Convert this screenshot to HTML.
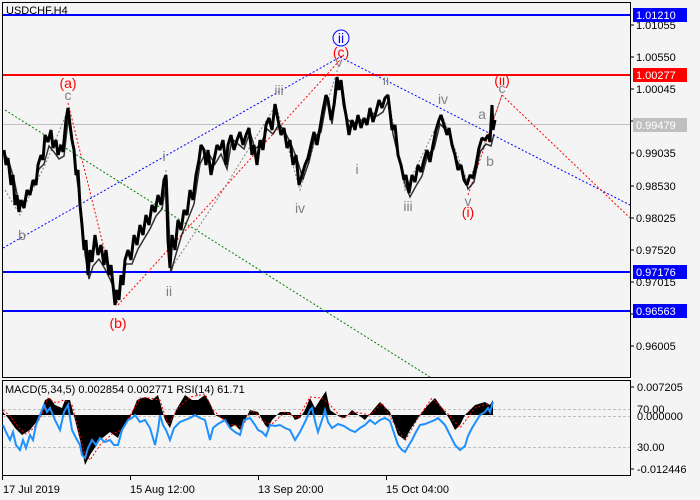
<!DOCTYPE html>
<html><head><style>
html,body{margin:0;padding:0;background:#f4f4f4;}
svg{display:block;font-family:"Liberation Sans","DejaVu Sans",sans-serif;}
</style></head><body>
<svg width="700" height="500" viewBox="0 0 700 500" xmlns="http://www.w3.org/2000/svg">
<rect width="700" height="500" fill="#f4f4f4"/>
<rect x="2.5" y="2.5" width="628" height="375" fill="#f4f4f4" stroke="#000" stroke-width="1"/>
<rect x="2.5" y="380.5" width="628" height="95" fill="#f4f4f4" stroke="#000" stroke-width="1"/>
<text x="6" y="14" font-size="11" fill="#000">USDCHF,H4</text>

<line x1="3" y1="124.5" x2="630" y2="124.5" stroke="#c0c0c0" stroke-width="1"/>
<line x1="3" y1="15" x2="630" y2="15" stroke="#0000ff" stroke-width="2"/>
<line x1="3" y1="75" x2="630" y2="75" stroke="#ff0000" stroke-width="2"/>
<line x1="3" y1="272" x2="630" y2="272" stroke="#0000ff" stroke-width="2"/>
<line x1="3" y1="311" x2="630" y2="311" stroke="#0000ff" stroke-width="2"/>

<g fill="none" stroke-dasharray="2,2" stroke-width="1">
<line x1="3" y1="248" x2="340" y2="57" stroke="#0000ff"/>
<line x1="340" y1="57" x2="630" y2="205" stroke="#0000ff"/>
<line x1="5" y1="110" x2="430" y2="377" stroke="#008000"/>
<line x1="68" y1="103" x2="118" y2="305" stroke="#ff0000"/>
<line x1="118" y1="305" x2="340" y2="60" stroke="#ff0000"/>
<line x1="468" y1="195" x2="502" y2="95" stroke="#ff0000"/>
<line x1="502" y1="95" x2="630" y2="218" stroke="#ff0000"/>
<polyline points="5,190 20,215 45,165 68,110" stroke="#808080"/>
<polyline points="166,170 170,270 220,195 276,105 300,190 338,68" stroke="#808080"/>
<polyline points="388,95 405,190 442,115 468,183 490,130 495,115 502,95" stroke="#808080"/>
</g>

<polyline fill="none" stroke="#000" stroke-width="3" stroke-linejoin="bevel" points="
4,150 6,165 8,158 11,185 13,175 15,205 17,195 19,212 21,200 24,208 27,190 30,195 33,180 36,185 38,165 41,155 43,160 45,135 48,142 51,130 53,148 56,140 58,155 61,145 63,152 66,120 68,108 70,125 72,140 74,150 76,175 78,170 80,205 82,225 84,250 86,240 88,275 90,250 92,262 95,235 98,255 101,245 104,265 106,250 109,275 111,265 113,285 115,305 117,290 119,300 121,275 123,285 125,260 128,250 131,260 134,235 137,245 140,225 143,235 146,215 149,225 152,205 155,212 158,195 161,205 164,180 166,175 168,240 170,268 172,235 175,250 178,220 181,230 184,210 187,215 190,190 193,200 196,175 199,160 201,145 204,150 206,165 208,150 211,175 214,160 217,145 220,150 223,140 226,165 228,145 231,135 234,150 237,140 240,132 243,145 246,135 249,128 252,155 254,145 257,165 260,140 263,150 266,125 269,118 272,130 275,104 278,120 281,135 284,128 287,148 290,140 293,165 296,155 299,185 302,175 305,165 308,158 311,145 314,132 317,145 320,128 323,110 326,95 328,100 331,120 334,105 337,77 339,90 341,80 344,105 346,115 349,135 352,120 355,130 358,115 361,128 364,118 367,125 370,108 373,122 376,112 379,100 382,108 385,98 388,95 390,112 392,130 395,125 398,155 401,165 404,180 406,175 409,193 412,175 415,182 418,165 421,172 424,160 427,150 430,162 433,145 436,130 439,120 441,115 444,125 447,135 449,128 452,145 455,155 458,170 461,165 464,180 467,185 470,175 473,178 476,165 479,148 482,138 485,140 488,135 490,142 492,105 493,130 495,120
"/>
<polyline fill="none" stroke="#000" stroke-width="1.5" opacity="0.8" transform="translate(1,4)" points="
4,150 8,158 13,175 17,195 21,200 27,190 33,180 38,165 43,160 48,142 53,148 58,155 63,152 68,108 72,140 76,175 80,205 84,250 88,275 92,262 98,255 104,265 109,275 113,285 117,290 121,275 125,260 131,260 137,245 143,235 149,225 155,212 161,205 166,175 170,268 175,250 181,230 187,215 193,200 199,160 204,150 208,150 214,160 220,150 226,165 231,135 237,140 243,145 249,128 254,145 260,140 266,125 272,130 278,120 284,128 290,140 296,155 302,175 308,158 314,132 320,128 326,95 331,120 337,77 341,80 346,115 352,120 358,115 364,118 370,108 376,112 382,108 388,95 392,130 398,155 404,180 409,193 415,182 421,172 427,150 433,145 439,120 444,125 449,128 455,155 461,165 467,185 473,178 479,148 485,140 490,142 493,130
"/>

<g font-size="14" text-anchor="middle">
<circle cx="341" cy="38" r="8" fill="none" stroke="#0000ff" stroke-width="1"/>
<text x="341" y="43" fill="#0000ff">ii</text>
<text x="341" y="57" fill="#ff0000">(c)</text>
<text x="68" y="88" fill="#ff0000">(a)</text>
<text x="118" y="328" fill="#ff0000">(b)</text>
<text x="468" y="217" fill="#ff0000">(i)</text>
<text x="502" y="85" fill="#ff0000">(ii)</text>
<g fill="#808080">
<text x="68" y="100">c</text>
<text x="22" y="240">b</text>
<text x="164" y="161">i</text>
<text x="169" y="296">ii</text>
<text x="279" y="95">iii</text>
<text x="300" y="213">iv</text>
<text x="339" y="67">v</text>
<text x="357" y="174">i</text>
<text x="386" y="85">ii</text>
<text x="408" y="211">iii</text>
<text x="443" y="104">iv</text>
<text x="468" y="206">v</text>
<text x="482" y="119">a</text>
<text x="490" y="166">b</text>
<text x="502" y="93">c</text>
</g>
</g>

<g font-size="11" fill="#000">
<g stroke="#000" stroke-width="1">
<line x1="630" y1="25" x2="634" y2="25"/><line x1="630" y1="57" x2="634" y2="57"/>
<line x1="630" y1="89" x2="634" y2="89"/><line x1="630" y1="121" x2="634" y2="121"/>
<line x1="630" y1="153" x2="634" y2="153"/><line x1="630" y1="186" x2="634" y2="186"/>
<line x1="630" y1="218" x2="634" y2="218"/><line x1="630" y1="250" x2="634" y2="250"/>
<line x1="630" y1="282" x2="634" y2="282"/><line x1="630" y1="314" x2="634" y2="314"/>
<line x1="630" y1="346" x2="634" y2="346"/>
</g>
<text x="636" y="29">1.01055</text>
<text x="636" y="61">1.00550</text>
<text x="636" y="93">1.00045</text>
<text x="636" y="157">0.99035</text>
<text x="636" y="190">0.98530</text>
<text x="636" y="222">0.98025</text>
<text x="636" y="254">0.97520</text>
<text x="636" y="286">0.97015</text>
<text x="636" y="350">0.96005</text>
<rect x="633" y="8" width="54" height="14" fill="#0000ff"/><text x="636" y="19" fill="#fff">1.01210</text>
<rect x="633" y="68" width="54" height="14" fill="#ff0000"/><text x="636" y="79" fill="#fff">1.00277</text>
<rect x="633" y="118" width="54" height="14" fill="#c0c0c0"/><text x="636" y="129" fill="#fff">0.99479</text>
<rect x="633" y="265" width="54" height="14" fill="#0000ff"/><text x="636" y="276" fill="#fff">0.97176</text>
<rect x="633" y="304" width="54" height="14" fill="#0000ff"/><text x="636" y="315" fill="#fff">0.96563</text>
</g>

<line x1="3" y1="409.5" x2="630" y2="409.5" stroke="#c0c0c0" stroke-dasharray="3,2"/>
<line x1="3" y1="416.5" x2="630" y2="416.5" stroke="#c0c0c0" stroke-dasharray="3,2"/>
<line x1="3" y1="447.5" x2="630" y2="447.5" stroke="#c0c0c0" stroke-dasharray="3,2"/>
<polygon fill="#000" points="3,415 3,412 8,418 15,428 22,435 30,430 38,420 45,400 50,398 55,405 62,408 65,400 70,400 75,420 80,440 85,465 90,455 100,440 110,432 118,438 122,428 130,418 137,400 145,397 152,400 158,395 165,420 170,428 176,410 185,395 192,400 198,400 205,395 210,403 215,415 225,420 230,428 235,425 240,430 245,420 250,410 258,412 265,425 268,428 272,420 280,412 290,412 295,420 300,418 305,410 310,398 315,408 320,400 326,391 330,410 340,417 345,418 352,410 365,420 373,410 380,402 390,412 398,435 405,440 410,430 420,415 428,405 435,398 440,405 445,412 450,420 455,430 460,425 465,415 475,405 485,402 490,405 493,400 493,415"/>
<polyline fill="none" stroke="#ff0000" stroke-width="1" stroke-dasharray="2,2" points="3,410 10,416 18,427 26,434 34,428 42,415 48,398 56,403 64,400 72,405 78,428 84,452 90,460 100,445 112,434 122,430 132,412 140,398 150,398 160,400 168,425 178,408 190,397 205,394 213,410 228,424 242,427 252,410 264,422 272,424 285,412 298,418 310,397 322,398 330,405 342,418 355,412 370,415 382,403 395,425 405,441 418,418 432,398 448,414 460,428 475,408 490,403"/>
<polyline fill="none" stroke="#1e90ff" stroke-width="2" points="3,425 6,432 10,440 13,432 16,445 20,450 23,440 26,448 30,435 33,440 36,425 40,415 44,405 47,412 50,408 55,420 60,430 64,412 68,405 72,430 76,438 80,445 82,455 85,458 88,448 92,440 96,445 100,438 105,442 110,440 114,445 118,445 122,430 128,420 132,418 135,415 140,422 145,420 150,428 155,445 158,430 160,415 163,425 166,430 170,440 174,428 180,422 185,420 190,418 195,415 200,418 205,420 208,432 210,440 213,428 218,424 225,420 230,428 235,432 240,435 244,420 250,418 255,425 258,430 262,432 266,436 270,425 275,426 280,425 285,428 290,430 295,440 300,432 306,420 310,410 312,408 316,425 318,432 322,420 325,410 328,422 332,428 338,424 344,426 350,430 355,432 360,428 365,425 370,420 375,424 380,420 385,418 390,421 395,436 398,445 402,450 405,452 409,445 412,440 416,432 420,425 425,424 430,422 435,420 438,418 442,422 445,425 450,435 455,445 460,450 465,446 468,436 472,428 477,420 480,415 485,412 488,408 490,412 493,402"/>
<text x="5" y="393" font-size="11" fill="#000">MACD(5,34,5) 0.002854 0.002771 RSI(14) 61.71</text>
<g font-size="11" fill="#000">
<line x1="630" y1="387" x2="634" y2="387" stroke="#000"/>
<line x1="630" y1="469" x2="634" y2="469" stroke="#000"/>
<text x="637" y="391">0.007205</text>
<text x="637" y="413">70.00</text>
<text x="637" y="420">0.000000</text>
<text x="637" y="451">30.00</text>
<text x="637" y="473">-0.012446</text>
</g>

<g stroke="#000" stroke-width="1">
<line x1="2.5" y1="476" x2="2.5" y2="480"/>
<line x1="130.5" y1="476" x2="130.5" y2="480"/>
<line x1="258.5" y1="476" x2="258.5" y2="480"/>
<line x1="386.5" y1="476" x2="386.5" y2="480"/>
</g>
<g font-size="11" fill="#000">
<text x="3" y="493">17 Jul 2019</text>
<text x="130" y="493">15 Aug 12:00</text>
<text x="258" y="493">13 Sep 20:00</text>
<text x="386" y="493">15 Oct 04:00</text>
</g>
</svg>
</body></html>
